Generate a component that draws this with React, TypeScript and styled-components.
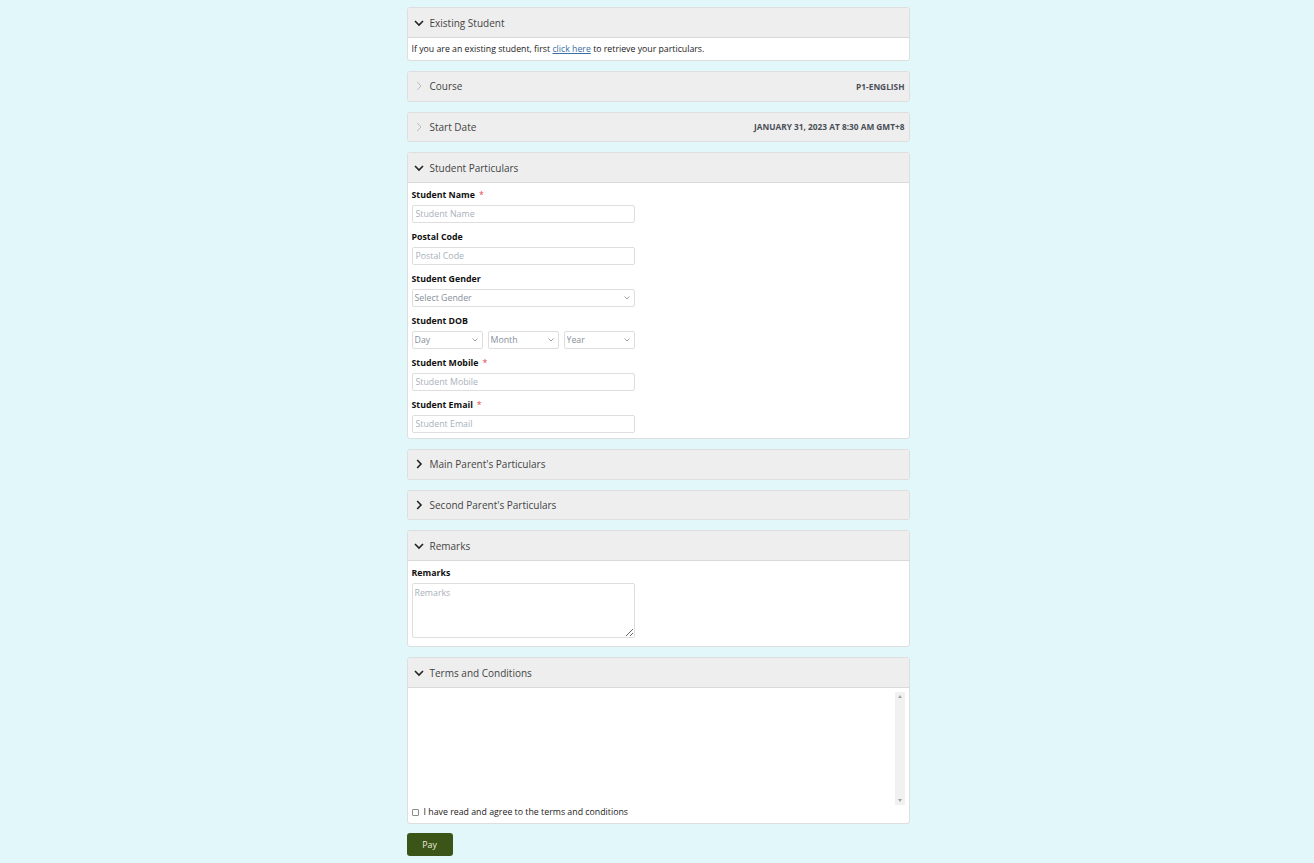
import React from "react";
import styled, { createGlobalStyle } from "styled-components";

const GlobalStyle = createGlobalStyle`
  html, body {
    margin: 0;
    padding: 0;
    background: #e1f7fa;
  }
  body {
    font-family: "Open Sans", "Noto Sans", Arial, sans-serif;
    color: #222;
  }
  * { box-sizing: border-box; }
`;

const Container = styled.div`
  width: 503px;
  margin: 0 auto;
  padding-top: 7px;
  padding-bottom: 7px;
  position: relative;
  left: 1px;
`;

const Panel = styled.section`
  background: #fff;
  border: 1px solid #dedede;
  border-radius: 3px;
  margin-bottom: 10px;
  overflow: hidden;
`;

const PanelHeader = styled.div<{ $open: boolean }>`
  display: flex;
  align-items: center;
  height: ${(p) => (p.$open ? 30 : 28.5)}px;
  background: #eeeeee;
  border-bottom: ${(p) => (p.$open ? "1px solid #d9d9d9" : "none")};
  padding: 0 4px 0 6px;
`;

const Chevron = styled.span`
  width: 11px;
  height: 11px;
  display: flex;
  align-items: center;
  justify-content: center;
  margin-right: 5px;
`;

const HeaderTitle = styled.span`
  font-size: 10px;
  color: #444;
  flex: 1;
`;

const HeaderValue = styled.span`
  font-size: 8.3px;
  font-weight: 700;
  color: #4a4f57;
  text-transform: uppercase;
`;

const Body = styled.div<{ $pad?: string }>`
  padding: ${(p) => p.$pad ?? "5px 4px 5px"};
`;

const InfoText = styled.p`
  margin: 0;
  font-size: 8.75px;
  line-height: 12px;
  color: #222;
  a {
    color: #3a6ea5;
    text-decoration: underline;
  }
`;

const Field = styled.div`
  margin-bottom: 8px;
  &:last-child {
    margin-bottom: 0;
  }
`;

const Label = styled.div`
  font-size: 8.8px;
  font-weight: 700;
  line-height: 12px;
  color: #111;
  margin-bottom: 4px;
`;

const Required = styled.span`
  color: #e04848;
  margin-left: 4px;
  font-weight: 400;
`;

const TextInput = styled.input`
  display: block;
  width: 223px;
  height: 18px;
  border: 1px solid #dedede;
  border-radius: 2px;
  padding: 0 3px;
  font-family: inherit;
  font-size: 8.8px;
  color: #333;
  background: #fff;
  outline: none;
  &::placeholder {
    color: #a9b1bb;
  }
`;

const SelectWrap = styled.div<{ $w: number }>`
  position: relative;
  width: ${(p) => p.$w}px;
  height: 18px;
`;

const Select = styled.select`
  display: block;
  appearance: none;
  width: 100%;
  height: 18px;
  border: 1px solid #dedede;
  border-radius: 2px;
  padding: 0 2px;
  font-family: inherit;
  font-size: 8.8px;
  color: #88909a;
  background: #fff;
  outline: none;
`;

const SelectArrow = styled.svg`
  position: absolute;
  right: 5px;
  top: 7px;
  pointer-events: none;
`;

const DobRow = styled.div`
  display: flex;
  gap: 5px;
`;

const TextArea = styled.textarea`
  display: block;
  width: 223px;
  height: 55px;
  border: 1px solid #dedede;
  border-radius: 2px;
  padding: 3px 2px;
  font-family: inherit;
  font-size: 8.8px;
  resize: vertical;
  outline: none;
  &::placeholder {
    color: #a9b1bb;
  }
`;

const TermsBox = styled.div`
  display: flex;
  height: 113px;
`;

const TermsText = styled.div`
  flex: 1;
  overflow: hidden;
`;

const ScrollTrack = styled.div`
  width: 10px;
  background: #f1f1f1;
  display: flex;
  flex-direction: column;
  justify-content: space-between;
  align-items: center;
  padding: 3px 0;
`;

const ScrollArrow = styled.span<{ $up?: boolean }>`
  width: 0;
  height: 0;
  border-left: 2.5px solid transparent;
  border-right: 2.5px solid transparent;
  ${(p) => (p.$up ? "border-bottom: 3px solid #a3a3a3;" : "border-top: 3px solid #a3a3a3;")}
`;

const AgreeRow = styled.div`
  display: flex;
  align-items: center;
  gap: 5px;
  margin-top: 1px;
  font-size: 8.8px;
  line-height: 12px;
  color: #222;
`;

const CheckBox = styled.span`
  width: 7px;
  height: 7px;
  border: 1px solid #8a8a8a;
  border-radius: 1px;
  background: #fff;
`;

const PayButton = styled.button`
  display: block;
  width: 46px;
  height: 23px;
  margin-top: -1px;
  border: none;
  border-radius: 3px;
  background: #3b5418;
  color: #e8eddc;
  font-family: inherit;
  font-size: 8.8px;
  cursor: pointer;
`;

function ChevronIcon({ dir, light }: { dir: "down" | "right"; light?: boolean }) {
  const color = light ? "#b3b3b3" : "#222";
  const width = light ? 0.9 : 1.6;
  return (
    <Chevron>
      <svg width="10" height="10" viewBox="0 0 10 10">
        {dir === "down" ? (
          <polyline points="1,3 5,7 9,3" fill="none" stroke={color} strokeWidth={width} />
        ) : (
          <polyline points="3.2,1 7,5 3.2,9" fill="none" stroke={color} strokeWidth={width} />
        )}
      </svg>
    </Chevron>
  );
}

function SelectBox({ w, label }: { w: number; label: string }) {
  return (
    <SelectWrap $w={w}>
      <Select defaultValue="">
        <option value="">{label}</option>
      </Select>
      <SelectArrow width="6" height="4" viewBox="0 0 6 4">
        <polyline points="0.5,0.5 3,3 5.5,0.5" fill="none" stroke="#888" strokeWidth="0.8" />
      </SelectArrow>
    </SelectWrap>
  );
}

function InputField({ label, required }: { label: string; required?: boolean }) {
  return (
    <Field>
      <Label>
        {label}
        {required && <Required>*</Required>}
      </Label>
      <TextInput placeholder={label} />
    </Field>
  );
}

export default function App() {
  return (
    <>
      <GlobalStyle />
      <Container>
        <Panel>
          <PanelHeader $open>
            <ChevronIcon dir="down" />
            <HeaderTitle>Existing Student</HeaderTitle>
          </PanelHeader>
          <Body $pad="5px 4px 5px">
            <InfoText>
              If you are an existing student, first <a href="#">click here</a> to retrieve your
              particulars.
            </InfoText>
          </Body>
        </Panel>

        <Panel>
          <PanelHeader $open={false}>
            <ChevronIcon dir="right" light />
            <HeaderTitle>Course</HeaderTitle>
            <HeaderValue>P1-English</HeaderValue>
          </PanelHeader>
        </Panel>

        <Panel>
          <PanelHeader $open={false}>
            <ChevronIcon dir="right" light />
            <HeaderTitle>Start Date</HeaderTitle>
            <HeaderValue>January 31, 2023 at 8:30 AM GMT+8</HeaderValue>
          </PanelHeader>
        </Panel>

        <Panel>
          <PanelHeader $open>
            <ChevronIcon dir="down" />
            <HeaderTitle>Student Particulars</HeaderTitle>
          </PanelHeader>
          <Body $pad="6px 4px 5px">
            <InputField label="Student Name" required />
            <InputField label="Postal Code" />
            <Field>
              <Label>Student Gender</Label>
              <SelectBox w={223} label="Select Gender" />
            </Field>
            <Field>
              <Label>Student DOB</Label>
              <DobRow>
                <SelectBox w={71} label="Day" />
                <SelectBox w={71} label="Month" />
                <SelectBox w={71} label="Year" />
              </DobRow>
            </Field>
            <InputField label="Student Mobile" required />
            <InputField label="Student Email" required />
          </Body>
        </Panel>

        <Panel>
          <PanelHeader $open={false}>
            <ChevronIcon dir="right" />
            <HeaderTitle>Main Parent's Particulars</HeaderTitle>
          </PanelHeader>
        </Panel>

        <Panel>
          <PanelHeader $open={false}>
            <ChevronIcon dir="right" />
            <HeaderTitle>Second Parent's Particulars</HeaderTitle>
          </PanelHeader>
        </Panel>

        <Panel>
          <PanelHeader $open>
            <ChevronIcon dir="down" />
            <HeaderTitle>Remarks</HeaderTitle>
          </PanelHeader>
          <Body $pad="6px 4px 8px">
            <Field>
              <Label>Remarks</Label>
              <TextArea placeholder="Remarks" />
            </Field>
          </Body>
        </Panel>

        <Panel>
          <PanelHeader $open>
            <ChevronIcon dir="down" />
            <HeaderTitle>Terms and Conditions</HeaderTitle>
          </PanelHeader>
          <Body $pad="4px 4px 5px">
            <TermsBox>
              <TermsText />
              <ScrollTrack>
                <ScrollArrow $up />
                <ScrollArrow />
              </ScrollTrack>
            </TermsBox>
            <AgreeRow>
              <CheckBox />I have read and agree to the terms and conditions
            </AgreeRow>
          </Body>
        </Panel>

        <PayButton>Pay</PayButton>
      </Container>
    </>
  );
}
